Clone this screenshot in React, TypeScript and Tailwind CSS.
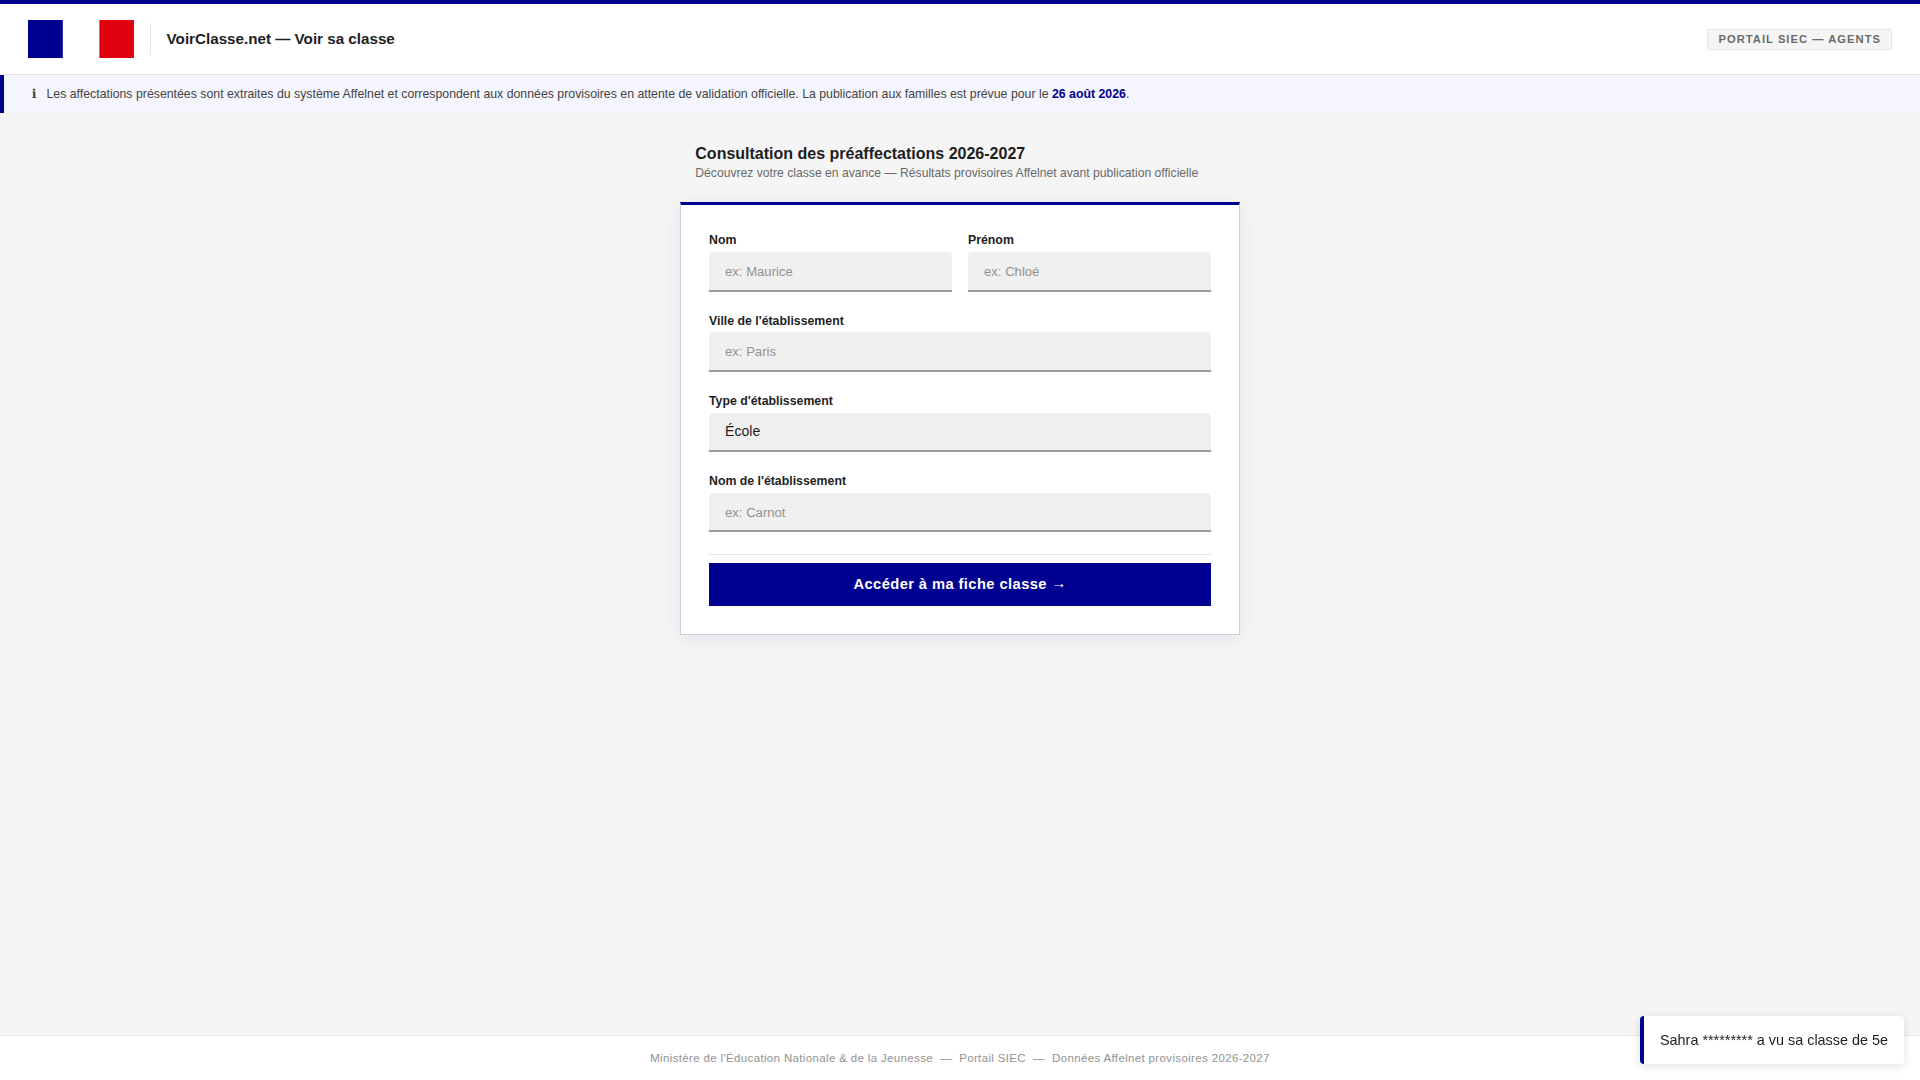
import React from "react";

type FieldProps = { id: string; label: string; placeholder?: string; value?: string };

function Field({ id, label, placeholder, value }: FieldProps) {
  return (
    <div className="flex h-[58.3px] flex-col justify-between">
      <label htmlFor={id} className="h-[14px] text-[12.32px] leading-[14px] font-bold text-[#1e1e1e]">
        {label}
      </label>
      <input
        id={id}
        type="text"
        placeholder={placeholder}
        defaultValue={value}
        className={`h-[39.5px] w-full rounded-t-[4px] border-b-2 border-[#999999] bg-[#f0f0f0] px-4 text-[14.08px] text-[#1e1e1e] outline-none placeholder:text-[13.12px] placeholder:text-[#929292] ${value ? "pb-px" : ""}`}
      />
    </div>
  );
}

export default function App() {
  return (
    <div className="flex min-h-screen flex-col bg-[#f5f5f5] font-['Liberation_Sans',Arial,sans-serif] text-[#1e1e1e]">
      <div className="h-1 bg-[#000091]" />
      <header className="flex h-[71px] items-center justify-between border-b border-[#e5e5e5] bg-white px-7">
        <div className="flex items-center">
          <svg width="106" height="38" viewBox="0 0 106 38" aria-hidden="true">
            <rect width="34.8" height="38" fill="#000091" />
            <rect x="71.4" width="34.6" height="38" fill="#e1000f" />
          </svg>
          <div className="mx-4 h-8 w-px bg-[#e5e5e5]" />
          <h1 className="-ml-[0.4px] text-[15.2px] leading-[18px] font-bold">VoirClasse.net — Voir sa classe</h1>
        </div>
        <div className="flex h-[21px] items-center rounded-[2px] border border-[#e5e5e5] bg-[#f5f5f5] px-2.5 text-[11.2px] font-bold tracking-[1.03px] text-[#6a6a6a]">
          PORTAIL SIEC — AGENTS
        </div>
      </header>
      <div className="flex h-[38px] items-center gap-2.5 border-l-4 border-[#000091] bg-[#f5f5fe] pl-7 text-[12.32px] text-[#444444]">
        <span className="w-[4.5px] font-['DejaVu_Sans',sans-serif]">ℹ</span>
        <p>
          Les affectations présentées sont extraites du système Affelnet et correspondent aux données provisoires en
          attente de validation officielle. La publication aux familles est prévue pour le{" "}
          <strong className="text-[#000091]">26 août 2026</strong>.
        </p>
      </div>
      <main className="mx-auto w-[560px] flex-1 pt-8">
        <div className="mb-[21px] px-[15.3px]">
          <h2 className="text-[16px] leading-[18px] font-bold">Consultation des préaffectations 2026-2027</h2>
          <p className="mt-[3px] text-[12.16px] leading-[15px] text-[#6a6a6a]">
            Découvrez votre classe en avance — Résultats provisoires Affelnet avant publication officielle
          </p>
        </div>
        <form className="h-[433px] border border-t-[3px] border-[#cacae0] border-t-[#000091] bg-white px-7 pt-[28.3px] shadow-[0_4px_20px_rgba(0,0,50,0.08)]">
          <div className="flex flex-col gap-[21.93px]">
            <div className="grid grid-cols-2 gap-4">
              <Field id="nom" label="Nom" placeholder="ex: Maurice" />
              <Field id="prenom" label="Prénom" placeholder="ex: Chloé" />
            </div>
            <Field id="ville" label="Ville de l'établissement" placeholder="ex: Paris" />
            <Field id="type" label="Type d'établissement" value="École" />
            <Field id="etab" label="Nom de l'établissement" placeholder="ex: Carnot" />
          </div>
          <hr className="mt-[21.7px] mb-2 border-[#e5e5e5]" />
          <button
            type="button"
            className="h-[43px] w-full bg-[#000091] text-[14.72px] font-bold tracking-[0.41px] text-white"
          >
            Accéder à ma fiche classe <span className="relative -top-px font-normal">→</span>
          </button>
        </form>
      </main>
      <footer className="flex h-[45px] items-center justify-center border-t border-[#e5e5e5] bg-white pt-0.5 text-[11.52px] tracking-[0.3456px] whitespace-pre text-[#929292]">
        Ministère de l'Éducation Nationale &amp; de la Jeunesse{"  —  "}Portail SIEC{"  —  "}Données Affelnet
        provisoires 2026-2027
      </footer>
      <div className="fixed right-4 bottom-4 flex h-12 items-center rounded-[4px] border-l-4 border-[#000091] bg-white px-4 pt-px text-[14.4px] shadow-[0_2px_10px_rgba(0,0,0,0.12)]">
        Sahra ********* a vu sa classe de 5e
      </div>
    </div>
  );
}
